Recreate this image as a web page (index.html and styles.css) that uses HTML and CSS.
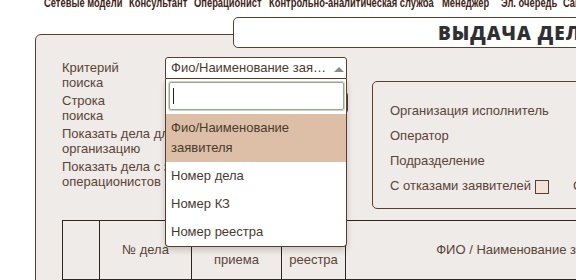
FILE: index.html
```html
<!DOCTYPE html>
<html lang="ru">
<head>
  <meta charset="UTF-8" />
  <title>Выдача дел</title>
  <link rel="stylesheet" href="styles.css">
</head>
<body>

  <nav class="topnav">
    <a href="#">Сетевые модели</a>
    <a href="#">Консультант</a>
    <a href="#">Операционист</a>
    <a href="#">Контрольно-аналитическая служба</a>
    <a href="#">Менеджер</a>
    <a href="#">Эл. очередь</a>
    <a href="#">Сайт</a>
  </nav>

  <div class="page-title">ВЫДАЧА ДЕЛ</div>

  <div class="panel">
    <div class="filters">
      <div class="search-form">
        <div class="label">Критерий<br>поиска</div>
        <div class="field">
          <div class="select">
            <span class="select-value">Фио/Наименование заявителя</span>
            <span class="arrow"></span>
            <div class="dropdown">
              <div class="dd-search"><div class="dd-input"><span class="caret"></span></div></div>
              <ul class="dd-options">
                <li class="active">Фио/Наименование заявителя</li>
                <li>Номер дела</li>
                <li>Номер КЗ</li>
                <li>Номер реестра</li>
              </ul>
            </div>
          </div>
        </div>

        <div class="label">Строка<br>поиска</div>
        <div class="field"><div class="text-input"></div></div>

        <div class="label wide">Показать дела для сотрудника на<br>организацию</div>
        <div class="label wide">Показать дела с заявками<br>операционистов</div>
      </div>

      <div class="options-box">
        <div class="opt-row">Организация исполнитель</div>
        <div class="opt-row">Оператор</div>
        <div class="opt-row">Подразделение</div>
        <div class="opt-row">
          <span>С отказами заявителей</span><span class="checkbox"></span>
          <span class="opt-next">С приостановкой</span><span class="checkbox"></span>
        </div>
      </div>
    </div>

    <table class="cases">
      <thead>
        <tr>
          <th class="c-num"></th>
          <th class="c-case">№ дела</th>
          <th class="c-date">Дата<br>приема</th>
          <th class="c-reg">Дата<br>реестра</th>
          <th class="c-name">ФИО / Наименование заявителя</th>
          <th class="c-status">Статус</th>
        </tr>
      </thead>
      <tbody>
        <tr><td></td><td></td><td></td><td></td><td></td><td></td></tr>
      </tbody>
    </table>
  </div>

</body>
</html>
```

FILE: styles.css
```css
html {
  overflow: hidden;
}
body {
  margin: 0;
  background: #fff;
  font-family: "Liberation Sans", Arial, sans-serif;
  font-size: 13px;
  color: #5b4336;
}
/* condensed top menu */
.topnav {
  display: grid;
  grid-template-columns: 85px 65px 75px 173px 59px 62px 60px;
  height: 8px;
  padding-left: 44px;
  white-space: nowrap;
  font: bold 12px/12px "Liberation Sans", Arial, sans-serif;
}
.topnav a {
  position: relative;
  top: -3px;
  transform: scaleX(0.78);
  transform-origin: left;
  color: #3f2417;
  text-decoration: none;
}
.page-title {
  position: relative;
  z-index: 2;
  width: 700px;
  height: 29px;
  margin: 9px 0 0 233px;
  padding-left: 204px;
  border: 1px solid #5c3d2e;
  border-radius: 5px;
  background: #fff;
  font: 800 19px/30px "Open Sans", sans-serif;
  letter-spacing: 1px;
  color: #2f3033;
  white-space: nowrap;
}
.panel {
  position: relative;
  z-index: 1;
  width: 1000px;
  margin: -14px 0 0 35px;
  padding: 22px 0 40px 26px;
  border: 1px solid #5c3d2e;
  border-radius: 6px;
  background: #efebe8;
}
.filters {
  display: flex;
  align-items: flex-start;
  gap: 24px;
}
.search-form {
  width: 286px;
  display: grid;
  grid-template-columns: 103px 183px;
  grid-auto-rows: 33px;
}
.label {
  padding-top: 3px;
  line-height: 15px;
  white-space: nowrap;
}
.label.wide {
  grid-column: 1 / -1;
}
.select {
  position: relative;
  z-index: 3;
  width: 182px;
  height: 22px;
  box-sizing: border-box;
  padding: 0 20px 0 5px;
  border: 1px solid #5c3d2e;
  border-radius: 3px 3px 0 0;
  background: #fff;
  line-height: 20px;
  color: #4d3a30;
}
.select-value {
  display: block;
  overflow: hidden;
  white-space: nowrap;
  text-overflow: ellipsis;
}
.arrow {
  position: absolute;
  top: 9px;
  right: 2px;
  border-left: 5px solid transparent;
  border-right: 5px solid transparent;
  border-bottom: 5px solid #8a8a8a;
}
.dropdown {
  position: absolute;
  top: calc(100% + 1px);
  left: -1px;
  right: -1px;
  border: 1px solid #5c3d2e;
  border-top: none;
  border-radius: 0 0 4px 4px;
  background: #fff;
  box-shadow: 0 3px 6px rgba(0,0,0,0.18);
}
.dd-search {
  padding: 3px 2px 4px 3px;
}
.dd-input {
  height: 28px;
  box-sizing: border-box;
  padding: 5px 3px;
  border: 1px solid #93a98c;
  border-radius: 2px;
  box-shadow: 0 0 0 1px #cbd7c4;
}
.caret {
  display: block;
  width: 1px;
  height: 16px;
  background: #222;
}
.dd-options {
  margin: 0;
  padding: 0;
  list-style: none;
}
.dd-options li {
  padding: 4px 5px;
  line-height: 20px;
  color: #4a3a30;
}
.dd-options li.active {
  background: #dcbfa6;
}
.text-input {
  width: 183px;
  height: 21px;
  box-sizing: border-box;
  margin-top: 2px;
  border: 1px solid #5c3d2e;
  border-radius: 3px;
  background: #fff;
}
.options-box {
  flex: 1;
  margin-top: 24px;
  padding: 16px 18px 10px 17px;
  border: 1px solid #5c3d2e;
  border-radius: 5px;
}
.opt-row {
  display: flex;
  align-items: center;
  height: 25px;
  white-space: nowrap;
}
.checkbox {
  width: 14px;
  height: 14px;
  box-sizing: border-box;
  margin: 2px 0 0 4px;
  border: 1px solid #5c3d2e;
  background: #f3e2d6;
}
.opt-next {
  margin-left: 24px;
}
.cases {
  margin-top: 11px;
  border-collapse: collapse;
  table-layout: fixed;
  width: 805px;
}
.cases th, .cases td {
  border: 1px solid #2e2521;
  padding: 0;
}
.cases th {
  height: 58px;
  font-weight: normal;
  line-height: 20px;
  text-align: center;
  color: #5b4336;
}
.cases td {
  height: 30px;
}
.c-num { width: 36px; }
.c-case { width: 91px; }
.c-date { width: 89px; }
.c-reg { width: 63px; }
.c-name { width: 376px; }
.c-status { width: 150px; }
```
